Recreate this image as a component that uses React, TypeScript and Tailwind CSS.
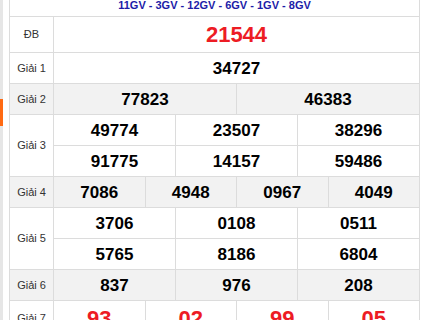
import React from "react";

type Prize = {
  label: string;
  rows: string[][];
  shaded?: boolean;
  red?: boolean;
};

const prizes: Prize[] = [
  { label: "ĐB", rows: [["21544"]], red: true },
  { label: "Giải 1", rows: [["34727"]] },
  { label: "Giải 2", rows: [["77823", "46383"]], shaded: true },
  {
    label: "Giải 3",
    rows: [
      ["49774", "23507", "38296"],
      ["91775", "14157", "59486"],
    ],
  },
  { label: "Giải 4", rows: [["7086", "4948", "0967", "4049"]], shaded: true },
  {
    label: "Giải 5",
    rows: [
      ["3706", "0108", "0511"],
      ["5765", "8186", "6804"],
    ],
  },
  { label: "Giải 6", rows: [["837", "976", "208"]], shaded: true },
  { label: "Giải 7", rows: [["93", "02", "99", "05"]], red: true },
];

const PrizeRows = ({ prize }: { prize: Prize }) => {
  const bg = prize.shaded ? "bg-[#f2f2f2]" : "bg-white";
  const tall = prize.red ? "h-[36px]" : "h-[31px]";
  return (
    <>
      {prize.rows.map((nums, r) => (
        <tr key={r} className={bg}>
          {r === 0 && (
            <td
              rowSpan={prize.rows.length}
              className="border border-[#dcdcdc] text-center text-[11px] text-[#333]"
            >
              {prize.label}
            </td>
          )}
          {nums.map((n, i) => (
            <td
              key={i}
              colSpan={12 / nums.length}
              className={
                prize.red
                  ? `${tall} border border-[#dcdcdc] text-center text-[22px] font-bold leading-none text-[#ed1c24]`
                  : `${tall} border border-[#dcdcdc] text-center text-[17px] font-bold leading-none text-black`
              }
            >
              {n}
            </td>
          ))}
        </tr>
      ))}
    </>
  );
};

export default function App() {
  return (
    <div
      className="flex h-[320px] w-[424px] overflow-hidden bg-white"
      style={{ fontFamily: '"Liberation Sans", Arial, sans-serif' }}
    >
      <div className="w-[3px] shrink-0 bg-[#e6e6e6]">
        <div className="mt-[99px] h-[27px] bg-[#ff6a13]" />
      </div>
      <div className="ml-[6px] w-[411px] shrink-0">
        <table className="-mt-[6px] w-full table-fixed border-collapse">
          <colgroup>
            <col className="w-[44px]" />
            {Array.from({ length: 12 }).map((_, i) => (
              <col key={i} />
            ))}
          </colgroup>
          <tbody>
            <tr>
              <td
                colSpan={13}
                className="h-[22px] border border-[#dcdcdc] text-center text-[11px] font-bold text-[#1c1ca8]"
              >
                11GV - 3GV - 12GV - 6GV - 1GV - 8GV
              </td>
            </tr>
            {prizes.map((p) => (
              <PrizeRows key={p.label} prize={p} />
            ))}
          </tbody>
        </table>
      </div>
    </div>
  );
}
